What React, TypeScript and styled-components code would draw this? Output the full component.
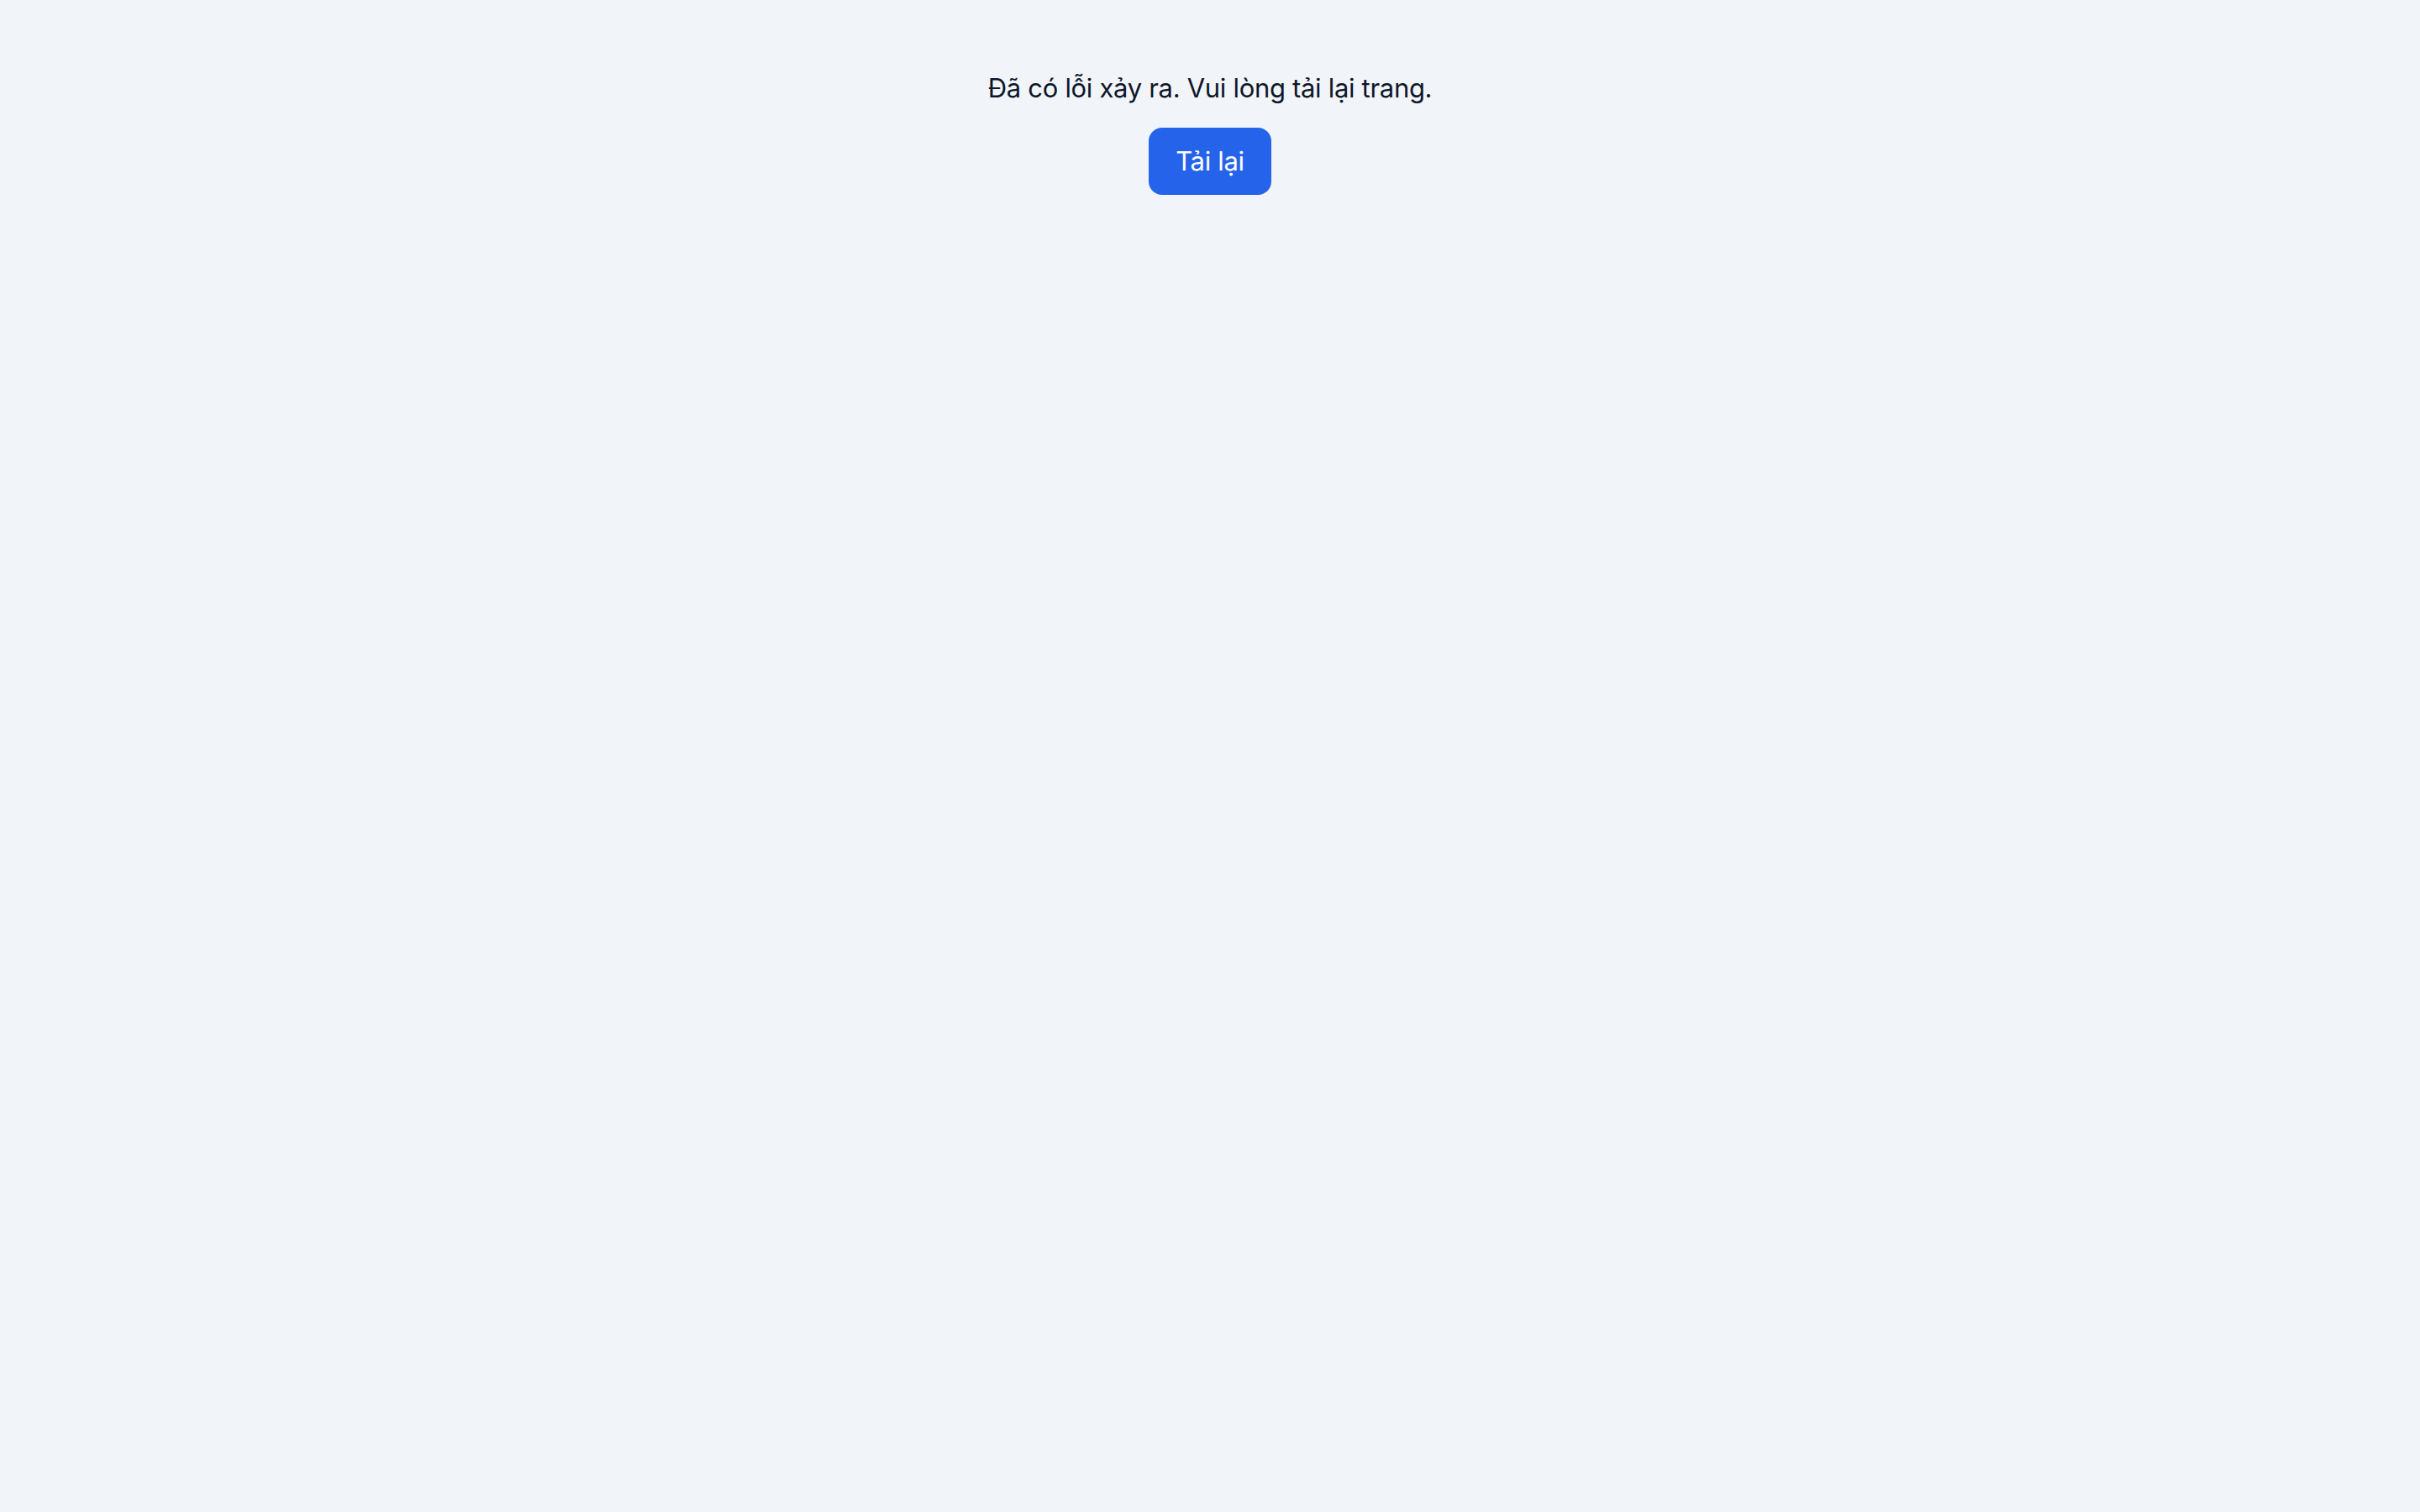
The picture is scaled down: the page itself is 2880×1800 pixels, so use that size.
import React from 'react';
import styled, {createGlobalStyle} from 'styled-components';

const GlobalStyle = createGlobalStyle`
  html, body {
    margin: 0;
    padding: 0;
    background: #f1f5f9;
  }
  body {
    font-family: Inter, "Noto Sans", sans-serif;
    color: #0f172a;
  }
`;

const Page = styled.div`
  min-height: 100vh;
  display: flex;
  flex-direction: column;
  align-items: center;
  padding-top: 81px;
  box-sizing: border-box;
`;

const Message = styled.p`
  margin: 0 0 23px;
  font-size: 31px;
  line-height: 48px;
  letter-spacing: -0.01em;
`;

const ReloadButton = styled.button`
  font-family: inherit;
  font-size: 31px;
  line-height: 48px;
  letter-spacing: -0.01em;
  padding: 16px 32px;
  border: none;
  border-radius: 16px;
  background: #2563eb;
  color: white;
  cursor: pointer;
`;

function App() {
  return (
    <>
      <GlobalStyle/>
      <Page>
        <Message>Đã có lỗi xảy ra. Vui lòng tải lại trang.</Message>
        <ReloadButton onClick={() => window.location.reload()}>Tải lại</ReloadButton>
      </Page>
    </>
  );
}

export default App;
